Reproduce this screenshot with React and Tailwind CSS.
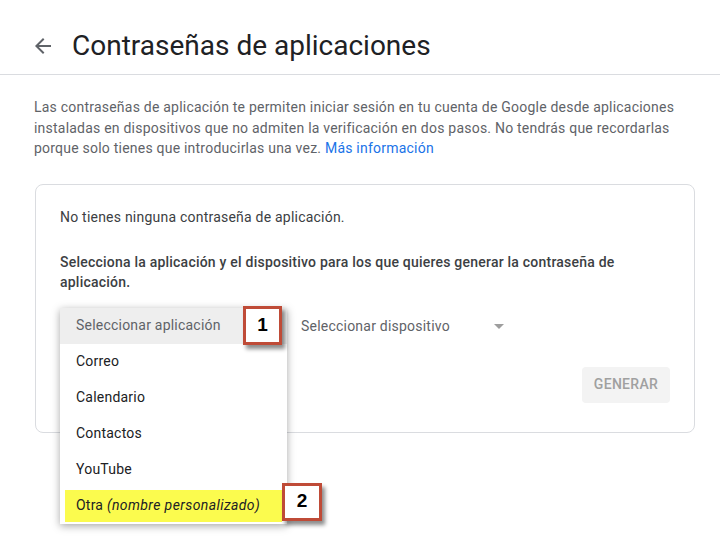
import React from "react";

const items = ["Correo", "Calendario", "Contactos", "YouTube"];

const Badge = ({ n, className }) => (
  <div
    className={`absolute flex items-center justify-center bg-white border-[3px] border-[#bf4b37] shadow-[3px_4px_4px_rgba(0,0,0,0.45)] font-['Liberation_Sans',Arial,sans-serif] font-bold text-[19px] tracking-normal text-black ${className}`}
  >
    {n}
  </div>
);

const App = () => {
  return (
    <div className="w-[720px] h-[537px] overflow-hidden bg-white font-['Roboto',sans-serif] tracking-[0.22px]">
      {/* header */}
      <div className="h-[75px] flex items-center border-b border-[#dadce0] pl-[31px] pt-[18px]">
        <svg width="24" height="24" viewBox="0 0 24 24" className="fill-[#5f6368]">
          <path d="M20 11H7.83l5.59-5.59L12 4l-8 8 8 8 1.41-1.41L7.83 13H20v-2z" />
        </svg>
        <h1 className="ml-[17px] text-[28px] leading-8 tracking-normal text-[#202124] font-normal">
          Contraseñas de aplicaciones
        </h1>
      </div>

      <p className="px-[34px] mt-[22px] text-[14px] leading-[20.5px] text-[#5f6368]">
        Las contraseñas de aplicación te permiten iniciar sesión en tu cuenta
        de Google desde aplicaciones instaladas en dispositivos que no admiten
        la verificación en dos pasos. No tendrás que recordarlas porque solo
        tienes que introducirlas una vez.{" "}
        <span className="text-[#1a73e8]">Más información</span>
      </p>

      {/* card */}
      <div className="ml-[35px] w-[660px] mt-[25px] border border-[#dadce0] rounded-lg pt-[22px] pb-[29px] px-6">
        <p className="text-[14px] leading-5 text-[#3c4043]">
          No tienes ninguna contraseña de aplicación.
        </p>
        <p className="mt-[25px] text-[14px] leading-5 font-medium text-[#3c4043] pr-6">
          Selecciona la aplicación y el dispositivo para los que quieres generar
          la contraseña de aplicación.
        </p>

        <div className="mt-[17px] flex items-center h-9">
          <div className="relative w-[227px] h-9">
            <div className="absolute left-0 -top-px w-[227px] bg-white z-10 shadow-[0_2px_8px_rgba(0,0,0,0.35)] text-[14px]">
              <div className="h-9 flex items-center px-4 bg-[#eeeeee] text-[#5f6368]">
                Seleccionar aplicación
              </div>
              {items.map((it) => (
                <div key={it} className="h-9 flex items-center px-4 text-[#202124]">
                  {it}
                </div>
              ))}
              <div className="h-9 flex items-center px-[5px]">
                <div className="w-full h-[32px] flex items-center px-[11px] bg-[#fbfb4e] text-[#202124]">
                  Otra&nbsp;<i className="tracking-[0.4px]">(nombre personalizado)</i>
                </div>
              </div>
            </div>
            <Badge n="1" className="z-20 left-[183px] -top-[3px] w-[39px] h-[39px]" />
            <Badge n="2" className="z-20 left-[222px] top-[174px] w-[40px] h-[38px]" />
          </div>
          <div className="ml-[14px] w-[208px] flex items-center justify-between text-[14px] text-[#5f6368]">
            <span>Seleccionar dispositivo</span>
            <span className="w-0 h-0 border-l-[5px] border-r-[5px] border-t-[5px] border-l-transparent border-r-transparent border-t-[#9e9e9e] mr-[5px]" />
          </div>
        </div>

        <div className="mt-[22px] flex justify-end">
          <button className="w-[88px] h-9 rounded bg-[#f3f3f3] text-[14px] font-medium text-[#a0a0a0] tracking-[0.3px]">
            GENERAR
          </button>
        </div>
      </div>
    </div>
  );
};

export default App;
